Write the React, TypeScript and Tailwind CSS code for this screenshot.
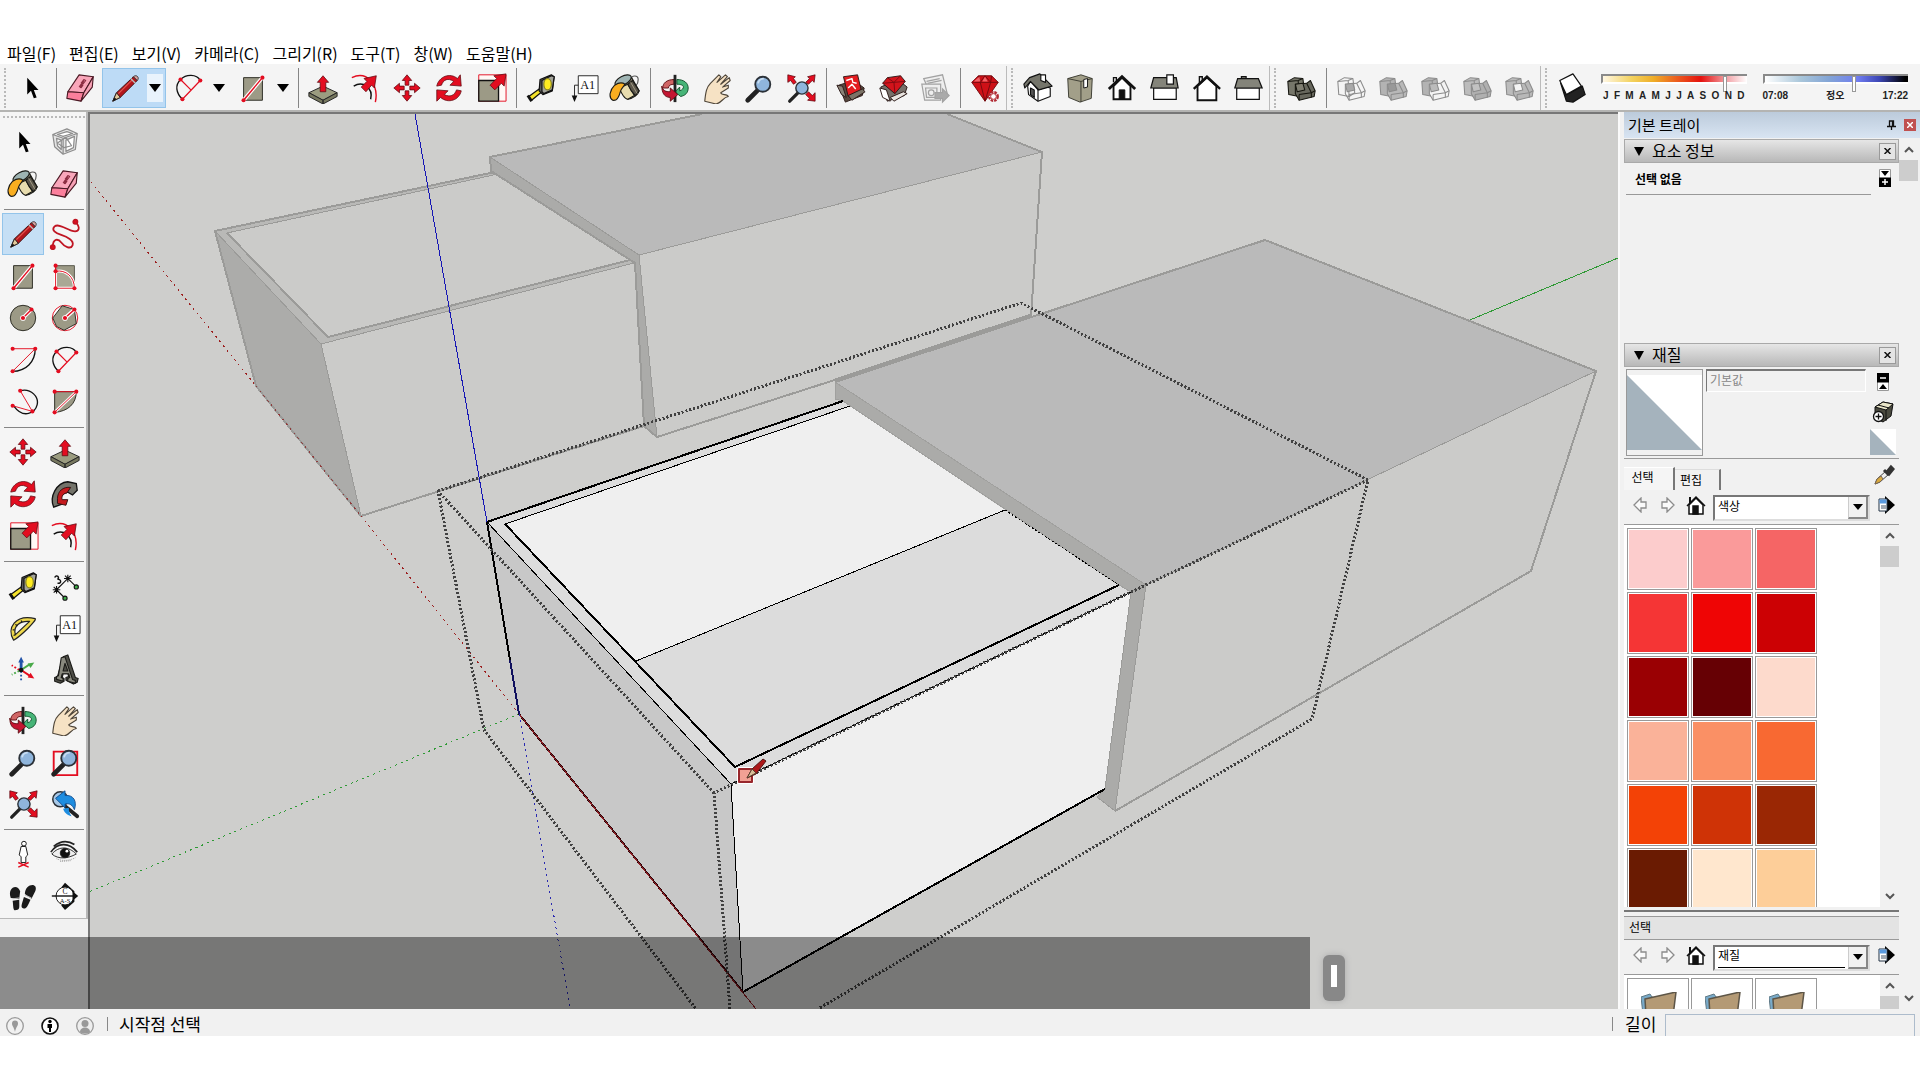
import React from "react";

type IconName =
  | "cursor" | "component" | "bucket" | "eraser" | "pencil" | "freehand" | "rect" | "rotRect"
  | "circle" | "polygon" | "arc1" | "arc2" | "arc3" | "pie" | "move" | "push" | "rotate" | "follow"
  | "scale" | "offset" | "tape" | "dimension" | "protractor" | "text" | "axes" | "text3d" | "orbit"
  | "pan" | "zoom" | "zoomWin" | "zoomExt" | "previous" | "position" | "look" | "walk" | "section"
  | "warehouse" | "extWarehouse" | "layout" | "ruby" | "iso" | "topView" | "front" | "right"
  | "back" | "leftView" | "shell" | "intersect" | "union" | "subtract" | "trim" | "split" | "shadow";

const RED = "#e30d20";
const TAN = "#9c9a86";

const Dot = ({ x, y, c = RED }: { x: number; y: number; c?: string }) => <circle cx={x} cy={y} r="2.2" fill={c} />;

const Arrow = ({ d }: { d: string }) => <path d={d} fill={RED} stroke="#5c0a10" strokeWidth="0.8" strokeLinejoin="round" />;

const lens = (
  <>
    <path d="M15 20 5 30" stroke="#222" strokeWidth="5" strokeLinecap="round" />
    <circle cx="21" cy="13" r="8" fill="#8fb5dc" stroke="#2b3138" strokeWidth="2" />
    <path d="M16 12a6 6 0 0 1 6-5" stroke="#c9def2" strokeWidth="2" fill="none" />
  </>
);

const Cubes = ({ a, b, line, mid = "none" }: { a: string; b: string; line: string; mid?: string }) => (
  <g stroke={line} strokeWidth="1.1" strokeLinejoin="round">
    <path d="M3 10l7-4 9 1 2 15-6 4-11-2z" fill={a} />
    <path d="M3 10l11-1 5-2M14 9l1 17" fill="none" />
    <path d="M11 13l12-1 4-3 5 11-1 6-16 4-4-7z" fill={b} />
    <path d="M15 24l13-2 4-2M23 12l5 10M15 24v6M28 22v5" fill="none" />
    <path d="M11 13l8-1 2 7-8 2z" fill={mid} />
  </g>
);

const icons: Record<IconName, React.ReactNode> = {
  cursor: <path d="M13 6v18l4-4 3 8 3-1-3-8h5z" fill="#000" />,
  component: (
    <g fill="none" stroke="#8d8d8d" strokeWidth="1.3" strokeLinejoin="round">
      <path d="M4 9l15-6 11 5-2 17-13 5-9-8zM4 9l11 4 15-5M15 13v17" fill="#e4e4e4" />
      <path d="M8 13l5 2v10l-4-4zM18 15l9-4-1 12-8 4zM9 9l10-3 6 2-10 3z" fill="#fff" />
      <path d="M9 18l9-6 6 9-8 2z" />
    </g>
  ),
  bucket: (
    <g stroke="#1a1a16" strokeWidth="1.2" strokeLinejoin="round">
      <path d="M23 8c1-5 8-5 8 0 0 3-1 5-2 6" fill="none" stroke="#555" />
      <path d="M8 13 24 6l8 14c-1 4-6 8-12 9z" fill="#8b8674" />
      <path d="M11 17l9-4 7 12-7 4c-3 0-7-6-9-12z" fill="#e7dcae" />
      <path d="M20 13l5-4 7 11-4 5c-3-3-6-7-8-12z" fill="#5b564a" />
      <path d="M23 11l7 12" stroke="#a49d88" strokeWidth="1" />
      <ellipse cx="15" cy="9" rx="9.500" ry="4.500" transform="rotate(-28 15 9)" fill="#9eb4b3" />
      <path d="M6 14c-5 5-7 13-2 16 5 1 7-5 8-9s4-6 5-8c-4-3-8-1-11 1z" fill="#f9ae20" />
    </g>
  ),
  eraser: (
    <g stroke="#4a1823" strokeWidth="1.2" strokeLinejoin="round">
      <path d="M3 21 15 3l15 2-10 17z" fill="#f9a6ba" />
      <path d="M3 21l17 1-3 9-15-3z" fill="#fb7f9c" />
      <path d="M20 22 30 5l-1 11-12 15z" fill="#f7a1b5" />
      <path d="M15 16l2-3 2 1-2 3M17 12l3-4 2 1-3 4M16 17l4-8" fill="none" stroke="#8b2c41" />
    </g>
  ),
  pencil: (
    <g strokeLinejoin="round">
      <path d="M4 31l4-9 18-17 4 4-18 18z" fill="#b3151c" stroke="#3c1110" />
      <path d="M10 23 25 8" stroke="#e2584f" strokeWidth="1.200" />
      <path d="M4 31l4-9 4 5z" fill="#e4c99a" stroke="#222" />
      <path d="M4 31l2-4 2 2z" fill="#111" />
      <path d="M26 5c3-3 7 1 4 4z" fill="#d9a09d" stroke="#333" />
      <path d="M23 7l5 5" stroke="#bbb" strokeWidth="1.500" />
    </g>
  ),
  freehand: (
    <g fill="none" stroke="#c01522" strokeWidth="1.900">
      <path d="M28 4c6 6 4 11-2 10S10 5 6 9s1 7 7 9 14 6 12 11-9 1-12-3-9-5-9 5" />
      <Dot x={28} y={4} /><Dot x={4} y={31} />
    </g>
  ),
  rect: (
    <>
      <path d="M7 6h20v24H7z" fill={TAN} stroke="#28281f" />
      <path d="M7 30 27 6" stroke="#fff" strokeWidth="4" /><path d="M7 30 27 6" stroke={RED} strokeWidth="1.500" />
      <Dot x={7} y={30} /><Dot x={27} y={6} />
    </>
  ),
  rotRect: (
    <>
      <path d="M7 6h20v24H7z" fill={TAN} stroke="#55554a" />
      <path d="M7 12c11-2 20 6 20 18H7z" fill="#aaa895" stroke="#fff" strokeWidth="3" />
      <path d="M7 12c11-2 20 6 20 18H7V6" fill="none" stroke={RED} />
      <Dot x={7} y={6} /><Dot x={7} y={12} /><Dot x={7} y={30} /><Dot x={27} y={30} />
    </>
  ),
  circle: (
    <>
      <circle cx="17" cy="17" r="13.500" fill={TAN} stroke="#28281f" />
      <path d="M17 17l9-9" stroke="#fff" strokeWidth="4" /><path d="M17 17l9-9" stroke={RED} strokeWidth="1.500" />
      <circle cx="17" cy="17" r="3" fill="#fff" /><Dot x={17} y={17} /><Dot x={26} y={8} />
    </>
  ),
  polygon: (
    <>
      <circle cx="17" cy="17" r="13.500" fill="#fff" stroke={RED} />
      <path d="M4 17 14 4l13 4 2 15-13 7-8-4z" fill={TAN} stroke="#28281f" />
      <path d="M17 17l10-9" stroke="#fff" strokeWidth="4" /><path d="M17 17l10-9" stroke={RED} strokeWidth="1.500" />
      <circle cx="17" cy="17" r="3" fill="#fff" /><Dot x={17} y={17} /><Dot x={27} y={8} />
    </>
  ),
  arc1: (
    <g fill="none">
      <path d="M30 5c0 14-10 24-24 24" stroke="#111" strokeWidth="1.400" />
      <path d="M6 5h24L6 29" stroke={RED} /><Dot x={6} y={5} /><Dot x={30} y={5} /><Dot x={6} y={29} />
    </g>
  ),
  arc2: (
    <g fill="none">
      <path d="M10 29C3 22 2 14 8 8S25 2 29 9" stroke="#111" strokeWidth="1.400" />
      <path d="M10 29 29 9M8 8l11 11" stroke={RED} strokeWidth="1.300" /><Dot x={10} y={29} /><Dot x={29} y={9} /><Dot x={8} y={8} />
    </g>
  ),
  arc3: (
    <g fill="none">
      <path d="M14 5c12-3 20 7 18 15S18 36 7 21" stroke="#111" strokeWidth="1.400" />
      <path d="M14 5l13 22L6 21" stroke={RED} /><Dot x={14} y={5} /><Dot x={27} y={27} /><Dot x={6} y={21} />
    </g>
  ),
  pie: (
    <>
      <path d="M6 6h23c0 13-9 21-23 22z" fill={TAN} stroke="#28281f" />
      <path d="M6 28 29 6" stroke="#fff" strokeWidth="3" /><path d="M6 28 29 6H6" stroke={RED} fill="none" />
      <Dot x={6} y={28} /><Dot x={29} y={6} /><Dot x={6} y={6} />
    </>
  ),
  move: <Arrow d="M17 3l5 6h-3v5h-4V9h-3zM17 31l5-6h-3v-5h-4v5h-3zM3 17l6-5v3h5v4H9v3zM31 17l-6-5v3h-5v4h5v3z" />,
  push: (
    <>
      <path d="M2 22l15-7 15 7-15 8z" fill="#9b9c80" stroke="#222" />
      <path d="M2 22v4l15 8v-4zM32 22v4l-15 8v-4z" fill="#77785f" stroke="#222" />
      <Arrow d="M17 4l6 7h-3v10h-6V11h-3z" />
    </>
  ),
  rotate: <Arrow d="M4 15C6 5 18 0 26 7l3-4 1 12-12-1 4-4C16 6 11 8 9 14zM30 20C28 30 16 34 8 27l-4 4V19l12 1-4 4c6 3 11 1 13-5z" />,
  follow: (
    <>
      <path d="M5 31C0 20 8 5 20 4l9 2 1 7-5 5-5-3c-8 2-10 8-7 13z" fill="#73736a" stroke="#111" strokeWidth="1.400" />
      <path d="M9 22c0-8 6-13 14-12l-4 6c-4 0-6 4-5 7h6l-2 6-9-2z" fill="#c5191c" stroke="#301010" />
    </>
  ),
  scale: (
    <>
      <path d="M4 3h29v28H4z" fill="#fff8f5" stroke={RED} />
      <path d="M4 9h21v22H4z" fill={TAN} stroke="#111" strokeWidth="1.400" />
      <Arrow d="M33 2l-2 13-3-3-7 7-5-5 7-7-3-3z" />
    </>
  ),
  offset: (
    <>
      <path d="M3 6c16-8 29 8 25 26" fill="none" stroke={RED} strokeWidth="1.500" />
      <path d="M5 15c10-6 21 2 18 14" fill="none" stroke="#111" strokeWidth="1.500" />
      <Arrow d="M29 4l-2 13-3-3-6 7-5-5 6-6-3-3z" />
    </>
  ),
  tape: (
    <g stroke="#111" strokeWidth="1.300" strokeLinejoin="round">
      <path d="M4 26l11-8 3 3-11 9z" fill="#f4e22b" />
      <path d="M3 25l4 6" strokeWidth="3" />
      <path d="M16 8 28 3l3 2-2 15-10 4-4-4z" fill="#5d5d58" />
      <path d="M18 9l10-5 3 1-2 14-9 4-2-2z" fill="#a3a39b" />
      <ellipse cx="24" cy="13" rx="4" ry="6" fill="#ffec20" stroke="#8a8420" />
    </g>
  ),
  dimension: (
    <g stroke="#111" strokeWidth="1.200" fill="none">
      <path d="M8 21 20 9l9 9M8 21l9 9M4 21h8M8 17v8M5 18l6 6M11 18l-6 6M16 9h8M20 5v8M17 6l6 6M23 6l-6 6" />
      <path d="M6 8c2-4 6 0 3 2 4-1 5 5 0 4" strokeWidth="1.500" />
      <Dot x={29} y={18} c="#3fae49" /><Dot x={17} y={30} c="#3fae49" />
    </g>
  ),
  protractor: (
    <g stroke="#222" strokeWidth="1.300" strokeLinejoin="round">
      <path fillRule="evenodd" d="M7 30C-1 17 9 2 30 7c2 2-16 19-23 23zM9 24c-3-9 5-15 15-14z" fill="#eed84c" />
      <path d="M7 25l2-1M6 19h2M9 13l2 2M15 9l1 2" />
    </g>
  ),
  text: (
    <>
      <path d="M12 4h21v19H12z" fill="#fff" stroke="#222" />
      <path d="M12 14H8v12" fill="none" stroke="#222" /><path d="M5 25h6l-3 7z" fill="#111" />
      <text x="22" y="18" textAnchor="middle" fontSize="13" fontFamily="Liberation Serif, serif" fill="#111">A1</text>
    </>
  ),
  axes: (
    <g strokeWidth="2" fill="none">
      <path d="M15 17V7" stroke="#2152a8" strokeWidth="3" /><path d="M15 3l3 6h-6z" fill="#2152a8" />
      <path d="M15 17l9-6" stroke="#4aaa4a" /><path d="M29 9l-7 1 3 5z" fill="#4aaa4a" />
      <path d="M15 17l9 6" stroke={RED} /><path d="M29 26l-7-1 3-5z" fill={RED} />
      <path d="M15 18v11" stroke="#2152a8" strokeDasharray="2 2" /><path d="M13 17 5 12" stroke={RED} strokeDasharray="2 2" /><path d="M13 18l-8 4" stroke="#4aaa4a" strokeDasharray="2 2" />
      <circle cx="15" cy="17" r="2.500" fill="#111" />
    </g>
  ),
  text3d: (
    <g stroke="#1b1b18" strokeWidth="1.200" strokeLinejoin="round">
      <path d="M15 3l5-2 8 24 3 1-1 4-4 2-8-4V25l3-1-1-3h-5l-1 4 2 1v3l-4 2-6-2v-4l3-1z" fill="#4e4e47" />
      <path d="M13 4l4-1 8 24 3 1v3l-8-2v-3l2-1-1-4h-7l-1 4 2 1v3l-7-2v-3l2-1zM15 18h5l-3-8z" fill="#8a8a7f" fillRule="evenodd" />
    </g>
  ),
  orbit: (
    <g strokeWidth="1">
      <path d="M16 8C8 8 4 12 4 17h6c0-3 3-4 6-4z" fill="#d06565" stroke="#601015" />
      <path d="M19 8c8 0 12 4 12 9s-3 8-8 9l-6-5 5-5v4c3-1 4-3 4-4 0-2-3-3-7-3z" fill="#46b477" stroke="#12502c" />
      <path d="M17 3v29" stroke="#222" strokeWidth="3" />
      <path d="M3 15c1 5 4 6 9 6v-4l8 7-8 7v-4C5 27 3 21 3 15z" fill="#c41532" stroke="#601015" />
    </g>
  ),
  pan: <path d="M4 31c1-10 2-15 6-19L19 3l2 2-4 6L26 3l2 2-7 8 9-7 1 3-8 7 6-2v3l-8 5c0 3 7 1 8 4-6 1-7 7-13 8z" fill="#f6e2c4" stroke="#4e4539" strokeWidth="1.200" strokeLinejoin="round" />,
  zoom: lens,
  zoomWin: (<><path d="M5 6h25v25H5z" fill="none" stroke={RED} strokeWidth="2" />{lens}</>),
  zoomExt: (
    <>
      <path d="M14 22 5 31" stroke="#222" strokeWidth="3.500" strokeLinecap="round" />
      <circle cx="18" cy="17" r="6.500" fill="#8fb5dc" stroke="#2b3138" strokeWidth="1.500" />
      <Arrow d="M3 3l8 2-2 2 3 4-3 2-3-4-3 2zM32 3l-8 2 2 2-4 4 3 2 4-4 2 2zM32 31l-8-1 2-2-4-4 3-3 4 4 3-3z" />
    </>
  ),
  previous: (
    <>
      <path d="M18 20l12 10" stroke="#222" strokeWidth="4" strokeLinecap="round" />
      <circle cx="12" cy="12" r="8" fill="#a7c8e7" stroke="#2b3138" strokeWidth="1.600" />
      <path d="M7 11l10-8v5c9-1 13 6 10 15-2-5-5-7-10-6v4z" fill="#1e8de0" stroke="#134f91" />
      <path d="M15 22c2 6 6 7 9 8-2-3-3-5-3-9z" fill="#1e8de0" />
    </>
  ),
  position: (
    <>
      <circle cx="18" cy="6" r="2.500" fill="#fff" stroke="#111" />
      <path d="M15 9h5l2 9-2 2v6h-5v-6l-2-2z" fill="#fff" stroke="#111" />
      <path d="M12 26l11 5M23 26l-11 5" stroke={RED} strokeWidth="1.600" />
    </>
  ),
  look: (
    <g fill="none" stroke="#222">
      <path d="M2 15C9 5 21 4 30 15M5 9c6-5 14-7 22-2" strokeWidth="1.800" />
      <path d="M3 17c8-9 18-8 26 0-9 5-19 6-26 0z" fill="#eee" />
      <circle cx="17" cy="16" r="5" fill="#111" /><circle cx="19" cy="14" r="1.500" fill="#fff" stroke="none" />
      <path d="M8 22c6 3 14 2 20-1M12 25l12-1" stroke="#999" strokeDasharray="1 1" />
    </g>
  ),
  walk: (
    <g fill="#1b1b1b">
      <path d="M4 19C0 8 11 3 14 12l-1 8zM6 22l7-1c0 8 1 10-3 11s-3-3-4-10z" />
      <path d="M19 15C19 3 34 2 30 12l-4 8zM18 18l7 3c-4 9-5 10-8 9s-1-5 1-12z" />
      <path d="M6 20l7-1M19 16l7 3" stroke="#bbb" />
    </g>
  ),
  section: (
    <>
      <path d="M17 3l10 9v11L17 32l-4-5 12-10-12-9z" fill="#111" />
      <circle cx="17" cy="17" r="9.500" fill="#fff" stroke="#111" />
      <path d="M3 17h24" stroke="#111" strokeWidth="1.500" /><path d="M25 12l6 5-6 5z" fill="#111" />
      <text x="17" y="15" textAnchor="middle" fontSize="8" fontFamily="Liberation Serif, serif" fill="#111">C</text>
      <text x="17" y="24" textAnchor="middle" fontSize="7" fontFamily="Liberation Serif, serif" fill="#111">A-S</text>
    </>
  ),
  warehouse: (
    <g stroke="#2a1715" strokeLinejoin="round">
      <path d="M4 14l16-5 11 8-2 8-18 7z" fill="#58493f" /><path d="M2 14l6 1 4 12-5-3z" fill="#8b8378" />
      <path d="M9 5l15-2 4 17-14 6z" fill="#e41c20" /><path d="M12 9l6-2 1 4 4 1M14 17l4-4 4 5" stroke="#fff" strokeWidth="1.500" fill="none" />
      <path d="M14 25l15-7 3 3-14 9z" fill="#7b7367" />
    </g>
  ),
  extWarehouse: (
    <g stroke="#2a1715" strokeLinejoin="round">
      <path d="M4 16l18-8 10 8-3 9-18 6z" fill="#77706a" /><path d="M3 17l7 2 4 12-8-4z" fill="#fff" />
      <path d="M6 12l5-6 14-2 5 6-11 13z" fill="#d3131b" /><path d="M6 12l12-1 12-1M11 6l7 5 7-7M18 11l1 12" fill="none" stroke="#7d0a10" />
      <path d="M14 27l14-6 4 2-14 8z" fill="#e8e4e0" />
    </g>
  ),
  layout: (
    <g fill="#eee" stroke="#a2a2a2" strokeWidth="1.300">
      <path d="M5 7l20-4 5 20-17 2z" /><path d="M3 13h20v17H6z" /><path d="M7 17h12v10H8z" /><circle cx="13" cy="22" r="3" fill="none" />
      <path d="M8 10l14-3M9 12l15-3" /><path d="M17 22h8v-4l7 7-7 7v-4h-8z" fill="#aaa" />
    </g>
  ),
  ruby: (
    <>
      <path d="M3 11l7-7h14l7 7-14 20z" fill="#ce1017" stroke="#72090d" />
      <path d="M3 11h28M10 4l2 7 5 20 6-20 1-7M12 11l5-7 6 7" fill="none" stroke="#740a0e" />
      <path d="M5 10l6-5 1 5zM14 10l3-5 3 5z" fill="#f26368" />
      <circle cx="26" cy="26" r="4.500" fill="#fff" stroke="#b12a33" strokeWidth="2.600" strokeDasharray="2.600 1" /><circle cx="26" cy="26" r="3" fill="#fff" stroke="#b12a33" />
    </>
  ),
  iso: (
    <g stroke="#111" strokeWidth="1.200" strokeLinejoin="round">
      <path d="M6 15l3-5 8 9 9-3 4 1v9l-13 5-10-7z" fill="#fff" /><path d="M17 19v12" fill="none" />
      <path d="M2 13 8 6l11-4 13 13-14 4-9-9-6 7z" fill="#75756b" /><path d="M20 3h5v8l-5-2z" fill="#fff" /><path d="M9 17l4 2v8l-4-3z" fill="#555" />
    </g>
  ),
  topView: (
    <g stroke="#3a3a30"><path d="M4 7l14-4 12 4-1 21-12 4-12-5z" fill="#a29f89" /><path d="M4 7l14 3 12-3M18 10v22" fill="none" /><path d="M21 8l4-1v9l-4 1z" fill="#fff" stroke="#111" /></g>
  ),
  front: (
    <g stroke="#111"><path d="M8 15v14h18V15l-9-9z" fill="#fff" strokeWidth="2" /><path d="M8 11V6h3v4" fill="#fff" strokeWidth="1.500" /><path d="M3 18 17 5l14 13" fill="none" strokeWidth="3" /><path d="M14 19h6v10h-6z" fill="#111" /></g>
  ),
  right: (
    <g stroke="#111" strokeWidth="1.300"><path d="M6 17h24v12H6z" fill="#fff" /><path d="M6 6h24l2 11H3z" fill="#84847a" /><path d="M20 3h7v10h-7z" fill="#fff" /></g>
  ),
  back: (
    <g stroke="#111"><path d="M8 15v15h20V15L18 6z" fill="#fff" strokeWidth="2" /><path d="M10 13V5h3v5" fill="#fff" strokeWidth="1.500" /><path d="M4 18 18 5l14 13" fill="none" strokeWidth="2.500" /></g>
  ),
  leftView: (
    <g stroke="#111" strokeWidth="1.300"><path d="M5 17h24v12H5z" fill="#fff" /><path d="M10 5h5v3h-5z" fill="#84847a" /><path d="M6 7h22l4 10H3z" fill="#84847a" /></g>
  ),
  shell: <Cubes a="#76766a" b="#67675d" line="#15150f" mid="#807f72" />,
  intersect: <Cubes a="#f4f4f4" b="none" line="#8b8b8b" mid="#aaa" />,
  union: <Cubes a="#b3b3b3" b="#b8b8b8" line="#8b8b8b" mid="#999" />,
  subtract: <Cubes a="#b3b3b3" b="#f4f4f4" line="#8b8b8b" mid="#bbb" />,
  trim: <Cubes a="#bcbcbc" b="#b0b0b0" line="#8b8b8b" mid="#c2c2c2" />,
  split: <Cubes a="#bcbcbc" b="#b8b8b8" line="#8b8b8b" mid="#f4f4f4" />,
  shadow: (
    <g stroke="#111" strokeWidth="1.300" strokeLinejoin="round"><path d="M5 12l6 12 17-9 3 9-13 8-7-1z" fill="#222" /><path d="M4 9 18 2l9 13-16 9z" fill="#fff" /></g>
  ),
};

const Icon = ({ name }: { name: IconName }) => (
  <svg viewBox="0 0 34 34" className="h-8 w-8 shrink-0" fill="none" aria-hidden="true">{icons[name]}</svg>
);

const Tool = ({ name, label, active }: { name: IconName; label: string; active?: boolean }) => (
  <button type="button" aria-label={label} className={`flex h-[42px] w-[42px] shrink-0 items-center justify-center ${active ? "border border-[#93c4ea] bg-[#c5dff5]" : ""}`}>
    <Icon name={name} />
  </button>
);

const SplitTool = ({ name, label, active }: { name: IconName; label: string; active?: boolean }) => (
  <div className={`flex h-10 w-16 shrink-0 items-center border ${active ? "border-[#93c4ea] bg-[#bddbf6]" : "border-transparent"}`}>
    <button type="button" aria-label={label} className="flex w-11 justify-center"><Icon name={name} /></button>
    <button type="button" aria-label={`${label} 옵션`} className={`flex h-7 w-4 items-center justify-center ${active ? "bg-[#e9f3fc]" : ""}`}>
      <svg viewBox="0 0 12 8" className="h-2 w-3" aria-hidden="true"><path d="M0 0h12L6 8z" /></svg>
    </button>
  </div>
);

const VSep = () => <div className="flex w-2 shrink-0 justify-center"><div className="h-10 w-px bg-[#858585]" /></div>;
const VGrip = () => <div className="flex w-2.5 shrink-0 justify-center"><div className="h-10 border-l-2 border-dotted border-[#b9b9b9]" /></div>;

const menus = ["파일(F)", "편집(E)", "보기(V)", "카메라(C)", "그리기(R)", "도구(T)", "창(W)", "도움말(H)"];

const RANGE =
  "block h-4 w-full appearance-none bg-transparent [&::-webkit-slider-thumb]:h-4 [&::-webkit-slider-thumb]:w-1 [&::-webkit-slider-thumb]:appearance-none [&::-webkit-slider-thumb]:border [&::-webkit-slider-thumb]:border-[#999] [&::-webkit-slider-thumb]:bg-white";

const TopBar = () => (
  <div className="flex h-12 shrink-0 items-center overflow-hidden border-b-2 border-[#b4b4b2] bg-[#f4f4f4] pt-0.5">
    <div className="flex items-center">
      <VGrip />
      <Tool name="cursor" label="선택" />
      <VSep />
      <Tool name="eraser" label="지우개" />
      <SplitTool name="pencil" label="선" active />
      <SplitTool name="arc2" label="호" />
      <SplitTool name="rect" label="직사각형" />
      <VSep />
      <Tool name="push" label="밀기/끌기" />
      <Tool name="offset" label="오프셋" />
      <Tool name="move" label="이동" />
      <Tool name="rotate" label="회전" />
      <Tool name="scale" label="배율" />
      <VSep />
      <Tool name="tape" label="줄자" />
      <Tool name="text" label="텍스트" />
      <Tool name="bucket" label="페인트통" />
      <VSep />
      <Tool name="orbit" label="궤도" />
      <Tool name="pan" label="이동 보기" />
      <Tool name="zoom" label="확대/축소" />
      <Tool name="zoomExt" label="범위 확대" />
      <VSep />
      <Tool name="warehouse" label="3D Warehouse" />
      <Tool name="extWarehouse" label="Extension Warehouse" />
      <Tool name="layout" label="LayOut" />
      <VSep />
      <Tool name="ruby" label="확장 프로그램" />
    </div>
    <div className="flex h-full items-center border-l border-[#bbb]">
      <VGrip />
      <Tool name="iso" label="아이소" />
      <Tool name="topView" label="상단" />
      <Tool name="front" label="전면" />
      <Tool name="right" label="오른쪽" />
      <Tool name="back" label="후면" />
      <Tool name="leftView" label="왼쪽" />
    </div>
    <div className="flex h-full items-center border-l border-[#bbb]">
      <VGrip />
      <Tool name="shell" label="외부 셸" />
      <VSep />
      <Tool name="intersect" label="교차" />
      <Tool name="union" label="결합" />
      <Tool name="subtract" label="빼기" />
      <Tool name="trim" label="잘라내기" />
      <Tool name="split" label="분할" />
    </div>
    <div className="flex h-full flex-1 items-center border-l border-[#bbb]">
      <VGrip />
      <Tool name="shadow" label="그림자" />
      <div className="flex flex-1 gap-4 pr-3 pl-2 font-['Liberation_Sans','Noto_Sans_CJK_KR',sans-serif] text-[10px] leading-3 font-bold text-[#222]">
        <div className="flex-1">
          <div className="h-4">
            <div className="h-2.5 border-t-2 border-b-2 border-l-2 border-t-[#8a8a8a] border-b-white border-l-[#8a8a8a] bg-[linear-gradient(90deg,#fff7e4,#f3d25e_20%,#efae28_35%,#ec5a1e_52%,#e5120f_68%,#f2a3a8_86%,#fff)]">
              <input type="range" aria-label="날짜" defaultValue={86} className={RANGE} />
            </div>
          </div>
          <div className="flex justify-between px-0.5">
            {"JFMAMJJASOND".split("").map((m, i) => <span key={i}>{m}</span>)}
          </div>
        </div>
        <div className="flex-1">
          <div className="h-4">
            <div className="h-2.5 border-t-2 border-b-2 border-l-2 border-t-[#8a8a8a] border-b-white border-l-[#8a8a8a] bg-[linear-gradient(90deg,#fff,#a9c6da_25%,#82a4d6_45%,#6f7cf0_65%,#3c46b4_80%,#000_98%)]">
              <input type="range" aria-label="시간" defaultValue={63} className={RANGE} />
            </div>
          </div>
          <div className="flex justify-between"><span>07:08</span><span>정오</span><span>17:22</span></div>
        </div>
      </div>
    </div>
  </div>
);

const toolGroups: [IconName, string][][] = [
  [["cursor", "선택"], ["component", "구성요소"], ["bucket", "페인트통"], ["eraser", "지우개"]],
  [["pencil", "선"], ["freehand", "자유곡선"], ["rect", "직사각형"], ["rotRect", "회전 직사각형"], ["circle", "원"], ["polygon", "다각형"], ["arc1", "호"], ["arc2", "2점 호"], ["arc3", "3점 호"], ["pie", "파이"]],
  [["move", "이동"], ["push", "밀기/끌기"], ["rotate", "회전"], ["follow", "따라가기"], ["scale", "배율"], ["offset", "오프셋"]],
  [["tape", "줄자"], ["dimension", "치수"], ["protractor", "각도기"], ["text", "텍스트"], ["axes", "축"], ["text3d", "3D 텍스트"]],
  [["orbit", "궤도"], ["pan", "화면 이동"], ["zoom", "확대/축소"], ["zoomWin", "확대 창"], ["zoomExt", "범위 확대"], ["previous", "이전"]],
  [["position", "카메라 배치"], ["look", "둘러보기"], ["walk", "걷기"], ["section", "단면"]],
];

const SideTools = () => (
  <aside className="w-[88px] shrink-0 bg-[#f1f1f1]">
    <div className="border-r-2 border-b border-[#b8b8b8] bg-[#f5f5f5] pb-px pl-0.5">
      <div className="flex h-[9px] items-center"><div className="ml-px h-0.5 w-[82px] border-t-2 border-dotted border-[#b9b9b9]" /></div>
      {toolGroups.map((g, i) => (
        <React.Fragment key={i}>
          {i > 0 && <div className="flex h-2 items-center"><div className="ml-0.5 h-px w-20 bg-[#858585]" /></div>}
          <div className="grid w-[84px] grid-cols-2">
            {g.map(([n, l]) => <Tool key={n} name={n} label={l} active={n === "pencil"} />)}
          </div>
        </React.Fragment>
      ))}
    </div>
  </aside>
);

const Scene = () => (
  <svg viewBox="90 114 1528 895" preserveAspectRatio="xMinYMin slice" shapeRendering="crispEdges" className="absolute inset-0 h-full w-full" role="img" aria-label="3D 모델" fill="none" strokeLinejoin="round">
    <path d="M91 182 256 386" stroke="#9c2020" strokeDasharray="2 4" />
    <path d="M519 714 89 892" stroke="#2f9a35" strokeDasharray="2 4" />
    <path d="M1470 320 1618 258" stroke="#2f9a35" />
    <g stroke="#9b9b99">
      <path d="M215 231 495 172 634 263 644 426 361 516 321 344z" fill="#cbcbc9" stroke="none" />
      <path d="M215 231 321 344 361 516 256 386z" fill="#acacaa" />
      <path d="M215 231 495 172 498 174 227 233 328 337 630 260 634 263 321 344z" fill="#b9b9b7" stroke="none" />
      <path d="M495 172 215 231 256 386 361 516 644 426" strokeWidth="2" />
      <path d="M227 233 328 337 630 260" strokeWidth="2" />
      <path d="M227 233 498 174M321 344 634 263M321 344 361 516M215 231 321 344" />
      <path d="M639 255 1042 152 1031 316 657 437z" fill="#cbcbc9" />
      <path d="M490 157 702 114 947 114 1042 152 639 255z" fill="#bababa" stroke="none" />
      <path d="M490 157 639 255 657 437 644 426 635 263 491 171z" fill="#ababa9" />
      <path d="M702 114 490 157 491 171 635 263 644 426 657 437 1031 317 1042 152 947 114" strokeWidth="2" />
      <path d="M639 255 1042 152" />
      <path d="M1146 585 1596 371 1531 571 1115 811z" fill="#cbcbc9" />
      <path d="M835 382 1043 313 1265 240 1596 371 1146 585z" fill="#bababa" />
      <path d="M835 380 1031 315" strokeWidth="3" />
      <path d="M835 382 1265 240 1596 371 1531 571 1115 811" strokeWidth="2" />
    </g>
    <path d="M256 386 361 516" stroke="#8f3c3c" strokeDasharray="2 4" />
    <path d="M361 516 519 714" stroke="#9c2020" strokeDasharray="2 4" />
    <path d="M487 522 843 401 850 406 1131 592 731 784z" fill="#dcdcdc" />
    <path d="M505 524 850 406 1005 510 636 661z" fill="#efefef" />
    <path d="M487 522 731 784 743 992 519 714z" fill="#c8c8c8" />
    <path d="M731 784 1131 592 1105 789 743 992z" fill="#efefef" />
    <path d="M835 382 1146 585 1131 592 1119 585 843 401 835 399z" fill="#ababa9" stroke="#a0a09e" />
    <path d="M1131 592 1146 585 1115 811 1097 797 1105 789z" fill="#ababa9" stroke="#9b9b99" />
    <g stroke="#000">
      <path d="M505 524 850 406M636 661 1005 510M487 522 731 784 743 992M731 784 1131 592" />
      <path d="M1005 510 1119 585" strokeDasharray="2 2" />
      <path d="M487 522 843 401M505 524 735 767 1119 585M487 522 519 714M743 992 1105 789" strokeWidth="2" />
    </g>
    <path d="M519 714 743 992" stroke="#2a0508" strokeWidth="2" />
    <path d="M519 714 756 1009" stroke="#8a1c22" />
    <path d="M415 114 487 522" stroke="#1616b4" />
    <path d="M510 660 519 714" stroke="#10105e" strokeWidth="2" />
    <path d="M519 714 570 1009" stroke="#2a2ab0" strokeDasharray="2 4" />
    <g stroke="#424242" strokeWidth="3" strokeDasharray="2 2">
      <path d="M438 491 1021 303 1368 480 1312 719 818 1009" />
      <path d="M1368 480 1131 592 714 793 730 1009" />
      <path d="M714 793 438 491 484 730 696 1009" />
    </g>
    <g shapeRendering="auto">
      <path d="M739 769h13v13h-13z" fill="#f1a194" stroke="#fff" strokeWidth="4" />
      <path d="M739 769h13v13h-13z" fill="#f1a194" stroke="#98272c" strokeWidth="2" />
      <path d="M747 778l5-9 11-10 3 2-10 13z" fill="#ad1719" stroke="#4f1714" />
      <path d="M747 778l5-9 4 4z" fill="#d8be98" stroke="#5b4030" />
    </g>
  </svg>
);

const Chevron = ({ up }: { up?: boolean }) => (
  <svg viewBox="0 0 10 7" className="h-[7px] w-2.5" fill="none" stroke="#555" strokeWidth="2" aria-hidden="true">
    {up ? <path d="M1 6l4-4 4 4" /> : <path d="M1 1l4 4 4-4" />}
  </svg>
);

const Scrollbar = ({ down = true }: { down?: boolean }) => (
  <div className="flex w-[19px] shrink-0 flex-col items-center bg-[#f1f1f1]">
    <button type="button" aria-label="위로 스크롤" className="flex h-[21px] w-full shrink-0 items-center justify-center"><Chevron up /></button>
    <div className="h-[21px] w-full shrink-0 bg-[#cdcdcd]" />
    <div className="flex-1" />
    {down && <button type="button" aria-label="아래로 스크롤" className="flex h-[21px] w-full shrink-0 items-center justify-center"><Chevron /></button>}
  </div>
);

const PanelHeader = ({ title }: { title: string }) => (
  <div className="flex h-6 shrink-0 items-center border border-[#a9a9a9] bg-linear-to-b from-[#e6e6e6] to-[#b8b8b8] pr-0.5 pl-[9px]">
    <svg viewBox="0 0 10 9" className="h-[9px] w-2.5" aria-hidden="true"><path d="M0 0h10L5 9z" /></svg>
    <h2 className="ml-2 flex-1 pb-0.5 text-base leading-5">{title}</h2>
    <button type="button" aria-label={`${title} 닫기`} className="flex h-[17px] w-[17px] items-center justify-center border border-[#9a9a9a] bg-[#e4e4e4]">
      <svg viewBox="0 0 7 6" className="h-1.5 w-[7px]" stroke="#111" strokeWidth="1.500" aria-hidden="true"><path d="M.5 0l6 6M6.500 0l-6 6" /></svg>
    </button>
  </div>
);

const NavArrow = ({ flip, label }: { flip?: boolean; label: string }) => (
  <button type="button" aria-label={label} className="flex w-7 justify-center">
    <svg viewBox="0 0 14 16" className={`h-4 w-3.5 ${flip ? "rotate-180" : ""}`} fill="#fafafa" stroke="#8c8c8c" strokeWidth="1.300" aria-hidden="true"><path d="M1 8l7-7v4h5v6H8v4z" /></svg>
  </button>
);

const NavRow = ({ label, value, underline }: { label: string; value: string; underline?: boolean }) => (
  <div className="flex h-[35px] shrink-0 items-center border-b border-[#999] pb-1 pl-0.5">
    <NavArrow label="뒤로" />
    <NavArrow flip label="앞으로" />
    <button type="button" aria-label="모델 내" className="flex w-7 justify-center">
      <svg viewBox="0 0 20 20" className="h-5 w-5" fill="#fff" stroke="#111" strokeWidth="1.500" aria-hidden="true">
        <path d="M3 10v9h14v-9l-7-7z" /><path d="M4 8V2" strokeWidth="2" /><path d="M1 11l9-9 9 9" fill="none" /><path d="M7 11h5v8H7z" fill="#111" />
      </svg>
    </button>
    <div className="mt-1.5 ml-[3px] flex h-[26px] w-[157px] border-2 border-t-[#777] border-r-[#ddd] border-b-[#ddd] border-l-[#777] bg-white">
      <div className="flex-1 px-[3px]">
        <select aria-label={label} className={`block h-[21px] w-full appearance-none bg-white pb-1 text-xs leading-4 ${underline ? "border-b border-black" : ""}`}><option>{value}</option></select>
      </div>
      <span className="pointer-events-none flex w-5 items-center justify-center border-r-2 border-b-2 border-l border-[#888] border-l-[#ccc] bg-[#f1f1f1]">
        <svg viewBox="0 0 10 6" className="h-1.5 w-2.5" aria-hidden="true"><path d="M0 0h10L5 6z" /></svg>
      </span>
    </div>
    <button type="button" aria-label="세부 정보" className="ml-2">
      <svg viewBox="0 0 17 18" className="h-[18px] w-[17px]" aria-hidden="true"><path d="M7 0l10 9-10 9z" /><path d="M1 3h8v12H1z" fill="#fff" stroke="#234" /><path d="M1.500 3.500h7v4h-7z" fill="#5a9ade" /><path d="M3 10h5M3 12h5" stroke="#456" /></svg>
    </button>
  </div>
);

const swatches = [
  "#fccccc", "#fa9a9a", "#f56565", "#f53535", "#ef0505", "#cc0104",
  "#9a0003", "#660004", "#fddacc", "#fab299", "#fa9065", "#f86932",
  "#f34206", "#cf3306", "#9a2704", "#6a1b02", "#ffe7ce", "#fdce99",
];

const Tray = () => (
  <aside className="flex w-[302px] shrink-0 flex-col border-l-2 border-[#fafafa] bg-[#f1f1f1] pl-1 text-black">
    <div className="flex h-[26px] shrink-0 items-center bg-linear-to-b from-[#bccbdb] to-[#d8e4f2] pr-1 pl-1">
      <h1 className="flex-1 text-[15px] leading-5">기본 트레이</h1>
      <button type="button" aria-label="고정" className="mr-2"><svg viewBox="0 0 9 10" className="h-2.5 w-[9px]" fill="none" stroke="#111" strokeWidth="1.300" aria-hidden="true"><path d="M2.500 6V1h4v5M0 6.500h9M4.500 6v4M5.500 1v5" /></svg></button>
      <button type="button" aria-label="트레이 닫기" className="flex h-3 w-3 items-center justify-center bg-[#c0504f]"><svg viewBox="0 0 6 6" className="h-1.5 w-1.5" stroke="#fff" strokeWidth="1.500" aria-hidden="true"><path d="M0 0l6 6M6 0L0 6" /></svg></button>
    </div>
    <div className="flex min-h-0 flex-1 pt-px">
      <div className="flex w-[275px] shrink-0 flex-col overflow-hidden">
        <PanelHeader title="요소 정보" />
        <section className="flex h-[180px] shrink-0 justify-between pr-2">
          <p className="ml-0.5 h-8 w-[245px] border-b border-[#999] pt-1.5 pl-[9px] text-xs leading-5 font-bold">선택 없음</p>
          <button type="button" aria-label="세부 정보 표시" className="mt-1.5 h-[18px] w-3">
            <svg viewBox="0 0 12 18" className="h-[18px] w-3" aria-hidden="true"><path d="M.5.5h11v17H.5z" fill="#fff" stroke="#999" /><path d="M2 2h8L6 7zM0 8.500h12V18H0z" /><path d="M3 13h6M6 10v6" stroke="#fff" strokeWidth="1.500" /></svg>
          </button>
        </section>
        <PanelHeader title="재질" />
        <section className="flex h-[92px] shrink-0 border-b border-[#999] pt-0.5 pl-0.5">
          <div className="h-[87px] w-[77px] border border-[#999] py-[5px]">
            <svg viewBox="0 0 75 75" preserveAspectRatio="none" className="h-full w-full" aria-hidden="true"><path d="M0 0h75v75H0z" fill="#fff" /><path d="M0 0l75 75H0z" fill="#a5b3bd" /></svg>
          </div>
          <input aria-label="재질 이름" disabled defaultValue="기본값" className="ml-[3px] h-[23px] w-40 border border-t-2 border-t-[#777] border-r-white border-b-white border-l-[#777] bg-[#f1f1f1] pb-1 pl-[3px] text-xs text-[#888]" />
          <div className="flex flex-1 flex-col items-center pt-1">
            <button type="button" aria-label="보조 창 숨기기"><svg viewBox="0 0 12 18" className="h-[18px] w-3" aria-hidden="true"><path d="M.5.5h11v17H.5z" fill="#fff" stroke="#999" /><path d="M0 0h12v9.500H0zM2 16h8l-4-5z" /><path d="M3 5h6" stroke="#fff" strokeWidth="1.500" /></svg></button>
            <button type="button" aria-label="재질 만들기" className="mt-2.5">
              <svg viewBox="0 0 22 22" className="h-[22px] w-[22px]" stroke="#111" strokeLinejoin="round" aria-hidden="true"><path d="M3 6l8-5 10 2-2 12-8 6-8-4z" fill="#4a4a3f" /><path d="M3 6l8-5 10 2-7 6z" fill="#e9e5c8" /><path d="M6 4l11 3M14 9v11" fill="none" /><circle cx="6.500" cy="15.500" r="5" fill="#fff" strokeWidth="1.300" /><path d="M3.500 15.500h6M6.500 12.500v6" strokeWidth="1.300" /></svg>
            </button>
            <svg viewBox="0 0 26 26" className="mt-1.5 h-[26px] w-[26px]" aria-hidden="true"><path d="M0 0h26v26H0z" fill="#fff" /><path d="M0 0l26 26H0z" fill="#a5b3bd" /></svg>
          </div>
        </section>
        <div className="flex h-[31px] shrink-0 items-end text-xs">
          <div role="tablist" className="flex flex-1 items-end">
            <button role="tab" aria-selected="true" type="button" className="h-[23px] w-[51px] border-t border-r-2 border-t-white border-r-[#777] bg-[#f5f5f5] pr-3 pb-1">선택</button>
            <button role="tab" aria-selected="false" type="button" className="h-[21px] w-[46px] border-t border-r-2 border-t-[#ddd] border-r-[#777] pr-3 pb-px">편집</button>
          </div>
          <button type="button" aria-label="샘플 페인트" className="mr-1 mb-1">
            <svg viewBox="0 0 22 22" className="h-[22px] w-[22px]" aria-hidden="true"><path d="M2 20l2-5 9-8 3 3-9 8z" fill="#eee" stroke="#444" /><path d="M2 20l2-5 4-3 2 3-3 3z" fill="#d9a93c" stroke="#765" /><path d="M11 6l5 5M14 8l4-5 2 2-4 5z" stroke="#333" strokeWidth="3" fill="#333" /></svg>
          </button>
        </div>
        <NavRow label="재질 라이브러리" value="색상" />
        <div className="flex min-h-0 flex-1 overflow-hidden bg-white">
          <div className="grid flex-1 auto-rows-[62px] grid-cols-[62px_62px_62px] gap-0.5 overflow-hidden pt-[3px] pl-[3px]">
            {swatches.map((c) => (
              <button key={c} type="button" aria-label={`색상 ${c}`} className="border border-[#999] p-px"><span className="block h-full w-full" style={{ backgroundColor: c }} /></button>
            ))}
          </div>
          <Scrollbar />
        </div>
        <div className="mt-[3px] h-0.5 shrink-0 bg-[#777]" />
        <div className="mt-1 flex h-6 shrink-0 items-center border-y border-[#999] bg-[#e3e3e3] pb-0.5 pl-[5px] text-xs">선택</div>
        <NavRow label="보조 라이브러리" value="재질" underline />
        <div className="flex h-[34px] shrink-0 overflow-hidden bg-white">
          <div className="grid flex-1 auto-rows-[62px] grid-cols-[62px_62px_62px] gap-0.5 overflow-hidden pt-[3px] pl-[3px]">
            {[0, 1, 2].map((i) => (
              <button key={i} type="button" aria-label={`폴더 ${i + 1}`} className="border border-[#999] pt-3 pl-[13px]">
                <svg viewBox="0 0 36 46" className="h-[46px] w-9" aria-hidden="true"><path d="M0 5l9-3 2 3 4 1v34H4z" fill="#78aac9" stroke="#5f7885" /><path d="M4 7l31-7-5 40H6z" fill="#b49a75" stroke="#5d5547" strokeWidth="1.500" /></svg>
              </button>
            ))}
          </div>
          <Scrollbar down={false} />
        </div>
      </div>
      <div className="flex flex-1"><Scrollbar /></div>
    </div>
  </aside>
);

const StatusBar = () => (
  <footer className="flex h-[27px] shrink-0 items-center overflow-hidden bg-[#f1f1f1] pt-0.5 text-[17px] text-black">
    <div className="flex flex-1 items-center">
      <div className="flex gap-[17px] pt-1 pl-1.5">
        <svg viewBox="0 0 18 18" className="h-[18px] w-[18px]" fill="none" stroke="#999" aria-hidden="true"><circle cx="9" cy="9" r="8.300" strokeWidth="1.300" /><path d="M9 15C8 10 6 9 6 6.500a3 3 0 0 1 6 0C12 9 10 10 9 15z" fill="#999" stroke="none" /></svg>
        <svg viewBox="0 0 18 18" className="h-[18px] w-[18px]" aria-hidden="true"><circle cx="9" cy="9" r="8" fill="#fff" stroke="#111" strokeWidth="1.600" /><circle cx="9" cy="4.500" r="1.700" /><path d="M6.500 7H11v4h-1v4H8v-4H6.500z" /></svg>
        <svg viewBox="0 0 18 18" className="h-[18px] w-[18px]" aria-hidden="true"><circle cx="9" cy="9" r="8.300" fill="#eee" stroke="#999" strokeWidth="1.300" /><circle cx="9" cy="6.500" r="3.500" fill="#999" /><path d="M4 15c0-6 10-6 10 0-2 2-8 2-10 0z" fill="#999" /></svg>
      </div>
      <div className="ml-[13px] h-3.5 w-px bg-[#888]" />
      <p className="ml-[11px] leading-6">시작점 선택</p>
    </div>
    <div className="mr-3 h-3.5 w-px bg-[#888]" />
    <label htmlFor="length" className="w-10 leading-6">길이</label>
    <input id="length" className="mt-2 mr-[5px] h-7 w-[250px] border border-[#adbccc] bg-[#f1f1f1]" />
  </footer>
);

export default function App() {
  return (
    <div className="flex h-screen flex-col overflow-hidden bg-white pb-11 font-['Noto_Sans_CJK_KR',sans-serif]">
      <nav className="flex h-16 shrink-0 items-end gap-[13px] pb-px pl-[7px] text-base leading-5 text-black">
        {menus.map((m) => <button key={m} type="button" className="h-5">{m}</button>)}
      </nav>
      <TopBar />
      <main className="relative flex min-h-0 flex-1">
        <SideTools />
        <div className="relative flex-1 overflow-hidden border-t-2 border-l-2 border-[#777] bg-[#cececc]"><Scene /></div>
        <Tray />
        <div className="absolute bottom-0 left-0 h-[72px] w-[1310px] bg-black/42" />
        <div className="absolute bottom-2 left-[1323px] flex h-[46px] w-[22px] items-center justify-center rounded-md bg-[#888] shadow-[0_0_6px_#aaa]"><div className="mb-1 h-[22px] w-1.5 bg-white" /></div>
      </main>
      <StatusBar />
    </div>
  );
}
